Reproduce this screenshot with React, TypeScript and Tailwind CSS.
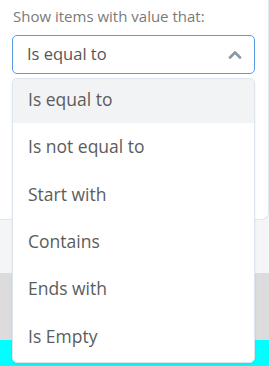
import { useState } from 'react';

const options = ['Is equal to', 'Is not equal to', 'Start with', 'Contains', 'Ends with', 'Is Empty'];

export default function App() {
  const [selected, setSelected] = useState(options[0]);

  return (
    <div
      className="relative w-[269px] h-[366px] overflow-hidden bg-[#f4f5f7]"
      style={{ fontFamily: '"Open Sans", "Noto Sans", sans-serif' }}
    >
      {/* Filter panel */}
      <div className="-ml-2 w-[277px] h-[220px] bg-white border border-t-0 border-[#e2e7ee] rounded-b-lg pl-[20px] pt-[5px]">
        <div className="text-[15px] leading-[22px] text-[#7a7a7a]">Show items with value that:</div>
        <button className="mt-[8px] w-[243px] h-[39px] -ml-[1px] flex items-center justify-between rounded-[5px] border-[1.5px] border-[#5a9be6] bg-white pl-[14px] pr-[12px]">
          <span className="text-[16.5px] text-[#555]">{selected}</span>
          <svg width="14" height="9" viewBox="0 0 14 9" fill="none">
            <polyline points="2,7.5 7,2.5 12,7.5" stroke="#8a97a4" strokeWidth="2.6" strokeLinecap="round" strokeLinejoin="round" />
          </svg>
        </button>
      </div>

      {/* Background strips */}
      <div className="mt-[53px] h-[67px] bg-[#dcdcdc]" />
      <div className="h-[26px] bg-[#00ffff]" />

      {/* Options menu */}
      <ul className="absolute left-[12px] top-[78px] w-[243px] flex flex-col gap-[3.4px] pb-[2px] rounded-[5px] border border-[#dfe5ec] bg-white shadow-[0_1px_3px_rgba(0,0,0,0.08)] overflow-hidden">
        {options.map((opt) => (
          <li
            key={opt}
            onClick={() => setSelected(opt)}
            className={
              'h-[44px] flex items-center pl-[15px] pb-[4px] text-[17.5px] text-[#5c5c5c] ' +
              (opt === selected ? 'bg-[#f2f3f5]' : '')
            }
          >
            {opt}
          </li>
        ))}
      </ul>
    </div>
  );
}
